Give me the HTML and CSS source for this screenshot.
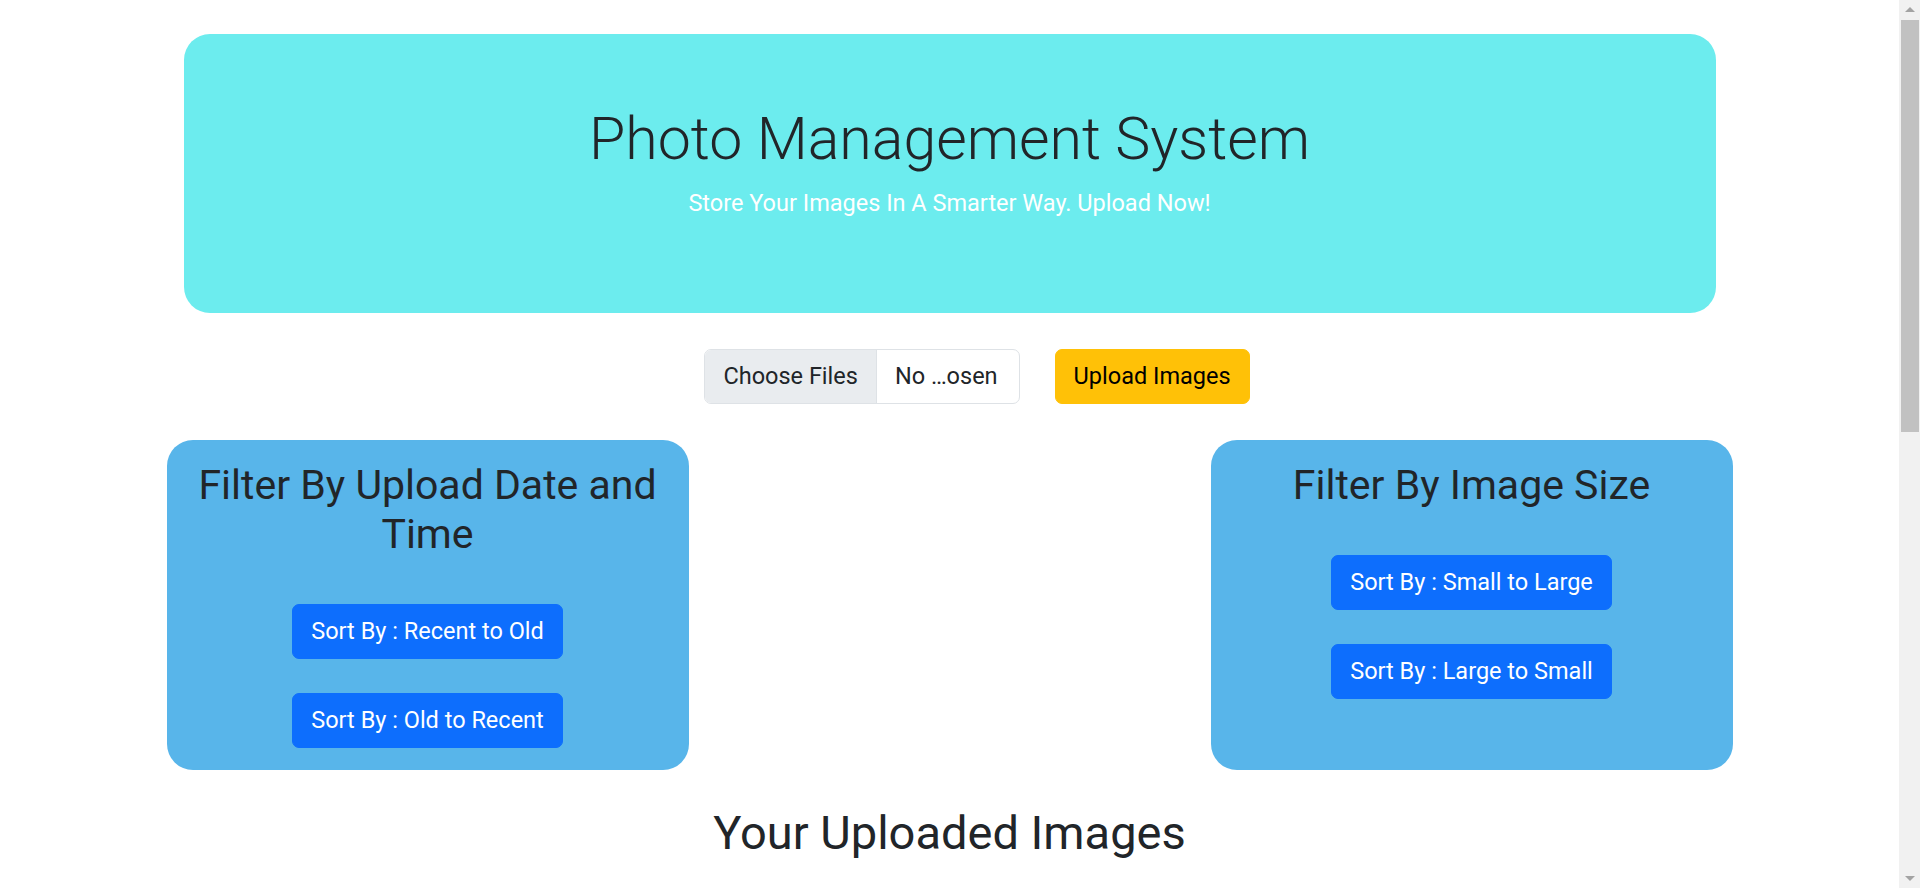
FILE: index.html
```html
<!DOCTYPE html>
<html lang="en">
<head>
<meta charset="utf-8">
<title>Photo Management System</title>
<link rel="stylesheet" href="styles.css">
</head>
<body>
<div class="page">
  <header class="hero">
    <h1 class="hero-title">Photo Management System</h1>
    <p class="hero-lead">Store Your Images In A Smarter Way. Upload Now!</p>
  </header>

  <form class="upload-row">
    <div class="file-input">
      <span class="file-btn">Choose Files</span>
      <span class="file-name">No …osen</span>
    </div>
    <button type="button" class="btn btn-warning">Upload Images</button>
  </form>

  <section class="filters">
    <div class="filter-box">
      <h2 class="filter-title">Filter By Upload Date and Time</h2>
      <div class="btn-stack">
        <button type="button" class="btn btn-primary">Sort By : Recent to Old</button>
        <button type="button" class="btn btn-primary">Sort By : Old to Recent</button>
      </div>
    </div>
    <div class="filter-spacer"></div>
    <div class="filter-box">
      <h2 class="filter-title">Filter By Image Size</h2>
      <div class="btn-stack">
        <button type="button" class="btn btn-primary">Sort By : Small to Large</button>
        <button type="button" class="btn btn-primary">Sort By : Large to Small</button>
      </div>
    </div>
  </section>

  <h1 class="gallery-title">Your Uploaded Images</h1>
  <div class="gallery"></div>
</div>

<aside class="scrollbar" aria-hidden="true">
  <div class="sb-button"><span class="sb-arrow sb-arrow-up"></span></div>
  <div class="sb-thumb"></div>
  <div class="sb-track"></div>
  <div class="sb-button"><span class="sb-arrow sb-arrow-down"></span></div>
</aside>
</body>
</html>
```

FILE: styles.css
```css
html, body {
  margin: 0;
  padding: 0;
}

body {
  font-family: Roboto, "Liberation Sans", sans-serif;
  color: #212529;
  background: #ffffff;
  padding-right: 21px;
}

/* browser scrollbar drawn over the right edge */
.scrollbar {
  position: fixed;
  top: 0;
  right: 0;
  width: 21px;
  height: 100vh;
  background: #f1f1f1;
  display: flex;
  flex-direction: column;
}

.sb-button {
  height: 20px;
  display: flex;
  align-items: center;
  justify-content: center;
}

.sb-arrow {
  width: 0;
  height: 0;
  border-left: 5px solid transparent;
  border-right: 5px solid transparent;
}

.sb-arrow-up {
  border-bottom: 5px solid #a3a3a3;
  margin-top: -1px;
}

.sb-arrow-down {
  border-top: 5px solid #a3a3a3;
  margin-top: 1px;
}

.sb-thumb {
  height: 412px;
  margin: 0 1px 0 2px;
  background: #c1c1c1;
}

.sb-track {
  flex: 1;
}

.page {
  width: 1566px;
  margin: 0 auto;
  padding-top: 34px;
}

.hero {
  margin: 0 17px;
  height: 279px;
  box-sizing: border-box;
  padding-top: 70px;
  background: #6cecee;
  border-radius: 26px;
  text-align: center;
}

.hero-title {
  margin: 0 0 12px;
  font-size: 59px;
  line-height: 70px;
  font-weight: 300;
  color: #212529;
}

.hero-lead {
  margin: 0;
  font-size: 23.5px;
  line-height: 35px;
  font-weight: 400;
  color: #ffffff;
}

.upload-row {
  margin: 36px 0 0;
  display: flex;
  justify-content: center;
  align-items: center;
  gap: 35px;
  padding-left: 55px;
}

.file-input {
  display: flex;
  height: 55px;
  box-sizing: border-box;
  border: 1px solid #dee2e6;
  border-radius: 7px;
  overflow: hidden;
  font-size: 23.5px;
  line-height: 35px;
  color: #212529;
  background: #ffffff;
}

.file-btn {
  padding: 9px 18px;
  background: #e9ecef;
  border-right: 1px solid #dee2e6;
}

.file-name {
  padding: 9px 21px 9px 18px;
}

.btn {
  font-family: Roboto, "Liberation Sans", sans-serif;
  font-size: 23.5px;
  line-height: 35px;
  font-weight: 400;
  padding: 9px 18px;
  border: 1px solid transparent;
  border-radius: 7px;
  cursor: pointer;
}

.btn-warning {
  background: #ffc107;
  border-color: #ffc107;
  color: #000000;
}

.btn-primary {
  background: #0d6efd;
  border-color: #0d6efd;
  color: #ffffff;
}

.filters {
  margin-top: 36px;
  display: grid;
  grid-template-columns: repeat(3, 1fr);
}

.filter-box {
  background: #58b5ea;
  border-radius: 26px;
  padding: 21px 21px 22px;
  display: flex;
  flex-direction: column;
  align-items: center;
  text-align: center;
}

.filter-title {
  margin: 0 0 45px;
  font-size: 41px;
  line-height: 49px;
  font-weight: 400;
  color: #212529;
}

.btn-stack {
  display: flex;
  flex-direction: column;
  align-items: center;
  gap: 34px;
}

.gallery-title {
  margin: 35px 0 0;
  text-align: center;
  font-size: 47px;
  line-height: 56px;
  font-weight: 400;
  color: #212529;
}

.gallery {
  min-height: 980px;
}
```
